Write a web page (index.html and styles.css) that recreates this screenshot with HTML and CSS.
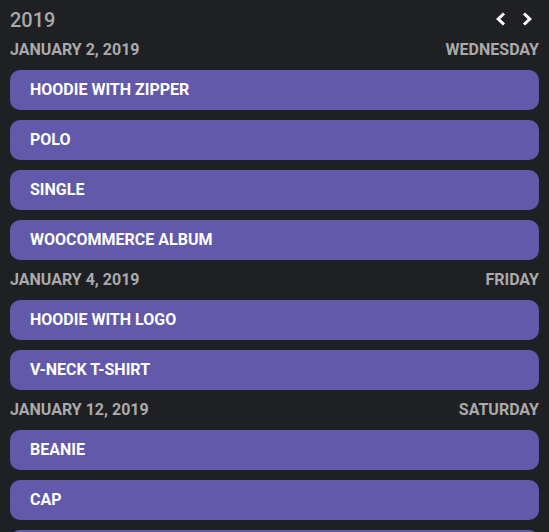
FILE: index.html
```html
<!DOCTYPE html>
<html>
<head>
<meta charset="utf-8">
<link rel="stylesheet" href="styles.css">
</head>
<body>
<div class="cal">
  <div class="cal-head">
    <div class="year">2019</div>
    <div class="nav">
      <span class="nav-btn"><svg width="11" height="14" viewBox="0 0 11 14"><polyline points="9,1.5 3.2,7 9,12.5" fill="none" stroke="#fff" stroke-width="3" stroke-linecap="butt" stroke-linejoin="miter"/></svg></span>
      <span class="nav-btn"><svg width="11" height="14" viewBox="0 0 11 14"><polyline points="2,1.5 7.8,7 2,12.5" fill="none" stroke="#fff" stroke-width="3" stroke-linecap="butt" stroke-linejoin="miter"/></svg></span>
    </div>
  </div>
  <div class="day-row"><span>January 2, 2019</span><span>Wednesday</span></div>
  <div class="event">Hoodie with Zipper</div>
  <div class="event">Polo</div>
  <div class="event">Single</div>
  <div class="event">WooCommerce Album</div>
  <div class="day-row"><span>January 4, 2019</span><span>Friday</span></div>
  <div class="event">Hoodie with Logo</div>
  <div class="event">V-Neck T-Shirt</div>
  <div class="day-row"><span>January 12, 2019</span><span>Saturday</span></div>
  <div class="event">Beanie</div>
  <div class="event">Cap</div>
  <div class="event">Belt</div>
</div>
</body>
</html>
```
FILE: styles.css
```css
html, body {
  margin: 0;
  padding: 0;
  background: #1f2024;
  overflow: hidden;
}
body {
  font-family: Roboto, "Liberation Sans", sans-serif;
  height: 532px;
}
.cal {
  display: flex;
  flex-direction: column;
  gap: 10px;
  padding: 10px;
}
.cal-head {
  display: flex;
  justify-content: space-between;
  align-items: center;
  height: 20px;
}
.year {
  font-size: 20px;
  line-height: 20px;
  font-weight: 500;
  color: #aaaaaa;
}
.nav {
  display: flex;
  gap: 16px;
  padding-right: 6px;
  height: 20px;
  align-items: center;
}
.nav-btn {
  display: flex;
  width: 11px;
  height: 14px;
  margin-top: -2px;
}
.day-row {
  display: flex;
  justify-content: space-between;
  font-size: 16px;
  line-height: 18px;
  font-weight: 700;
  text-transform: uppercase;
  color: #aaaaaa;
  margin-top: 1px;
  margin-bottom: 1px;
}
.event {
  height: 40px;
  flex: none;
  box-sizing: border-box;
  background: #6259ab;
  border-radius: 10px;
  padding: 0 20px 1px;
  display: flex;
  align-items: center;
  color: #ffffff;
  font-size: 16px;
  font-weight: 700;
  text-transform: uppercase;
}
```
